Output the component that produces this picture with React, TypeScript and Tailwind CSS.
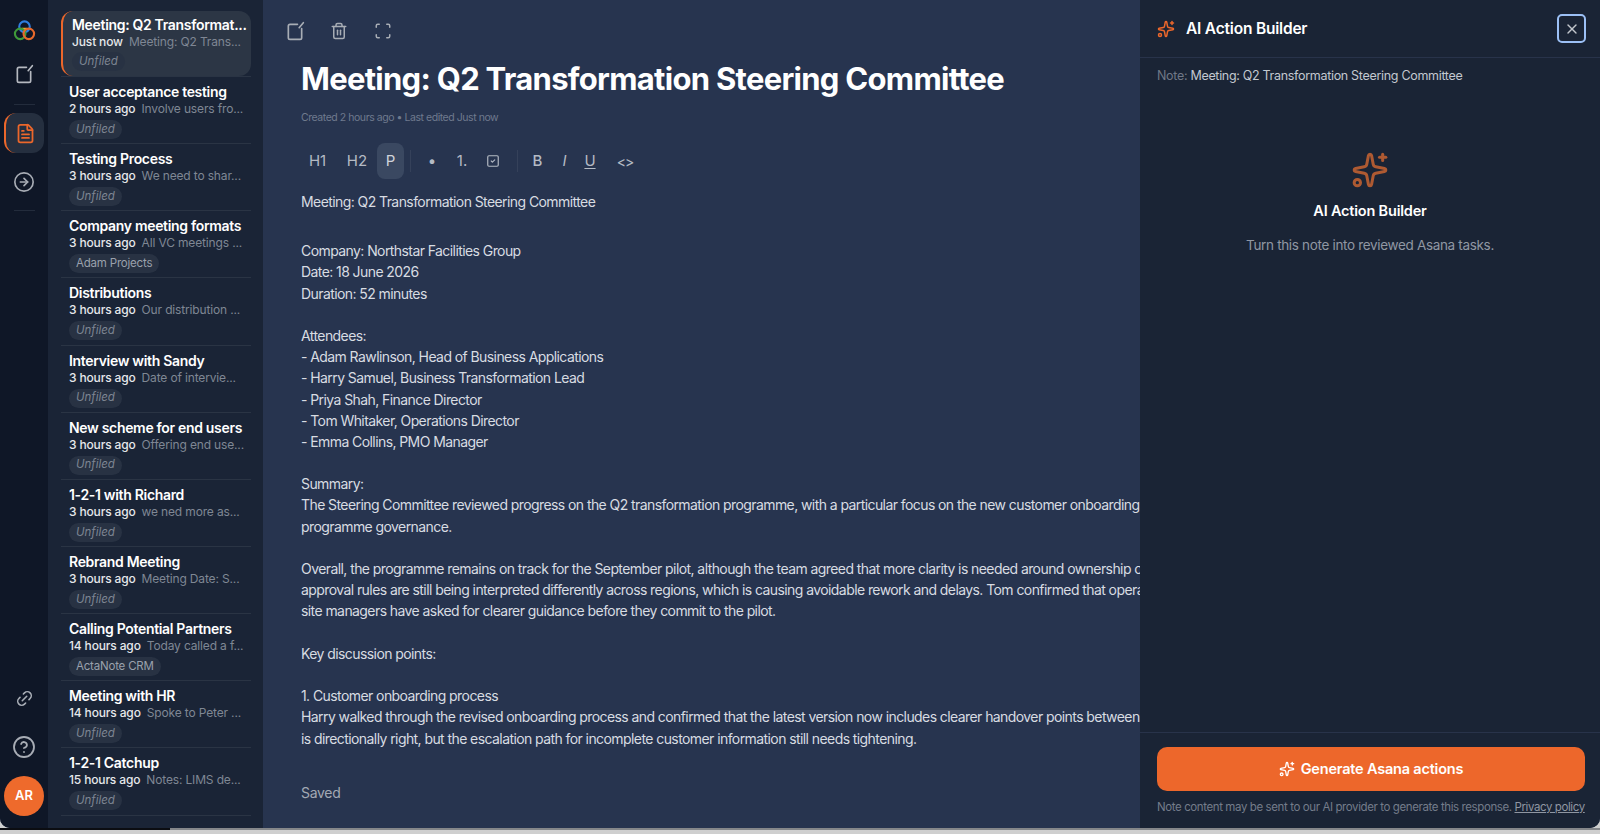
import { CircleArrowRight, CircleHelp, FileText, Link2, Scan, Sparkles, SquareCheck, Trash2, X } from 'lucide-react';

const NOTES = [
  { title: 'User acceptance testing', time: '2 hours ago', preview: 'Involve users fro...', tag: 'Unfiled' },
  { title: 'Testing Process', time: '3 hours ago', preview: 'We need to shar...', tag: 'Unfiled' },
  { title: 'Company meeting formats', time: '3 hours ago', preview: 'All VC meetings ...', tag: 'Adam Projects' },
  { title: 'Distributions', time: '3 hours ago', preview: 'Our distribution ...', tag: 'Unfiled' },
  { title: 'Interview with Sandy', time: '3 hours ago', preview: 'Date of intervie...', tag: 'Unfiled' },
  { title: 'New scheme for end users', time: '3 hours ago', preview: 'Offering end use...', tag: 'Unfiled' },
  { title: '1-2-1 with Richard', time: '3 hours ago', preview: 'we ned more as...', tag: 'Unfiled' },
  { title: 'Rebrand Meeting', time: '3 hours ago', preview: 'Meeting Date: S...', tag: 'Unfiled' },
  { title: 'Calling Potential Partners', time: '14 hours ago', preview: 'Today called a f...', tag: 'ActaNote CRM' },
  { title: 'Meeting with HR', time: '14 hours ago', preview: 'Spoke to Peter ...', tag: 'Unfiled' },
  { title: '1-2-1 Catchup', time: '15 hours ago', preview: 'Notes: LIMS de...', tag: 'Unfiled' },
];

const BODY = [
  'Company: Northstar Facilities Group',
  'Date: 18 June 2026',
  'Duration: 52 minutes',
  '',
  'Attendees:',
  '- Adam Rawlinson, Head of Business Applications',
  '- Harry Samuel, Business Transformation Lead',
  '- Priya Shah, Finance Director',
  '- Tom Whitaker, Operations Director',
  '- Emma Collins, PMO Manager',
  '',
  'Summary:',
  'The Steering Committee reviewed progress on the Q2 transformation programme, with a particular focus on the new customer onboarding',
  'programme governance.',
  '',
  'Overall, the programme remains on track for the September pilot, although the team agreed that more clarity is needed around ownership of',
  'approval rules are still being interpreted differently across regions, which is causing avoidable rework and delays. Tom confirmed that operations',
  'site managers have asked for clearer guidance before they commit to the pilot.',
  '',
  'Key discussion points:',
  '',
  '1. Customer onboarding process',
  'Harry walked through the revised onboarding process and confirmed that the latest version now includes clearer handover points between',
  'is directionally right, but the escalation path for incomplete customer information still needs tightening.',
];

function ComposeIcon({ className }: { className: string }) {
  return (
    <svg viewBox="0 0 24 24" fill="none" stroke="currentColor" strokeWidth="2" strokeLinecap="round" strokeLinejoin="round" className={className}>
      <path d="M15 4H6a2 2 0 0 0-2 2v14a2 2 0 0 0 2 2h12a2 2 0 0 0 2-2V9" />
      <path d="M22 2l-5 6" />
    </svg>
  );
}

function Logo() {
  return (
    <svg viewBox="0 0 24 24" className="h-[23px] w-[23px]" fill="none" strokeWidth="2.2">
      <path d="M9 9 L15 9 L12 15 Z" fill="#e3b32a" />
      <path d="M10 12 L14 12 L12 16 Z" fill="#3f9a3a" />
      <circle cx="12" cy="8" r="5.5" stroke="#2f7fe0" />
      <circle cx="7.5" cy="15.5" r="5.5" stroke="#3f9a3a" />
      <circle cx="16.5" cy="15.5" r="5.5" stroke="#e8692c" />
    </svg>
  );
}

function Tag({ label }: { label: string }) {
  const unfiled = label === 'Unfiled';
  return (
    <span className={`flex h-[19px] items-center rounded-full bg-[#283243] px-[7px] text-[11.5px] leading-none ${unfiled ? 'italic text-[#7d8592]' : 'tracking-[-0.2px] text-[#9aa1ac]'}`}>
      {label}
    </span>
  );
}

export default function App() {
  return (
    <div className="h-[834px] w-[1600px] overflow-hidden bg-[#cfcfcf] text-white" style={{ fontFamily: 'Inter, "Noto Sans", sans-serif' }}>
      <div className="flex h-[828px] overflow-hidden rounded-b-[10px] bg-[#27344f]">
        {/* Rail */}
        <aside className="flex w-[48px] shrink-0 flex-col items-center bg-[#0f1727] pt-[19px] pb-[12px]">
          <Logo />
          <ComposeIcon className="mt-[22px] h-[20px] w-[20px] text-[#b5b9c0]" />
          <div className="mt-[20px] mb-[8px] h-px w-[21px] bg-[#232c3c]" />
          <div className="flex h-[40px] w-[40px] shrink-0 items-center justify-center rounded-[12px] border-l-2 border-[#ec672b] bg-[#252f3f]">
            <FileText className="h-[21px] w-[21px] text-[#ec672b]" />
          </div>
          <CircleArrowRight className="mt-[18px] h-[22px] w-[22px] text-[#a8adb5]" strokeWidth={1.8} />
          <div className="mt-[17px] h-px w-[21px] bg-[#232c3c]" />
          <div className="flex-1" />
          <Link2 className="mb-[27px] h-[19px] w-[19px] -rotate-45 text-[#a8adb5]" />
          <CircleHelp className="mb-[17px] h-[24px] w-[24px] text-[#a8adb5]" strokeWidth={1.8} />
          <div className="flex h-[40px] w-[40px] items-center justify-center rounded-full bg-[#ee6a2c] text-[13px] font-semibold">AR</div>
        </aside>

        {/* Note list */}
        <nav className="w-[215px] shrink-0 bg-[#1a2436] pt-[11px] pl-[13px] pr-[12px]">
          <div className="h-[65px] rounded-[12px] border-l-2 border-[#ec672b] bg-[#2c3645] pl-[9px] pt-[5px]">
            <p className="truncate text-[14px] leading-[17px] font-semibold tracking-[-0.32px] text-white">Meeting: Q2 Transformat...</p>
            <p className="truncate text-[12px] leading-[17px] tracking-[-0.15px]">
              <span className="font-medium text-[#e6e8eb]">Just now</span>
              <span className="ml-[6px] text-[#7f8794]">Meeting: Q2 Trans...</span>
            </p>
            <div className="mt-[2px] flex"><Tag label="Unfiled" /></div>
          </div>
          {NOTES.map(note => (
            <div key={note.title} className="h-[67.15px] border-t border-[#2a3444] pl-[8px] pt-[6px]">
              <p className="truncate text-[14px] leading-[17px] font-semibold tracking-[-0.32px] text-white">{note.title}</p>
              <p className="truncate text-[12px] leading-[17px] tracking-[-0.15px]">
                <span className="font-medium text-[#e6e8eb]">{note.time}</span>
                <span className="ml-[6px] text-[#7f8794]">{note.preview}</span>
              </p>
              <div className="mt-[3px] flex"><Tag label={note.tag} /></div>
            </div>
          ))}
          <div className="border-t border-[#2a3444]" />
        </nav>

        {/* Editor */}
        <main className="min-w-0 flex-1 overflow-hidden pl-[38px]">
          <div className="flex h-[62px] items-center gap-[25px] text-[#a8adb5]">
            <ComposeIcon className="-ml-[16px] h-[20px] w-[20px]" />
            <Trash2 className="h-[18px] w-[18px]" />
            <Scan className="ml-[1px] h-[18px] w-[18px]" />
          </div>
          <h1 className="text-[31px] leading-[34px] font-bold tracking-[-0.71px] whitespace-nowrap text-white">Meeting: Q2 Transformation Steering Committee</h1>
          <p className="mt-[15px] text-[10.5px] leading-[14px] tracking-[-0.45px] text-[#6f7a8e]">Created 2 hours ago • Last edited Just now</p>

          <div className="mt-[18px] -ml-[3px] flex h-[36px] items-center text-[15px] text-[#b4bac4]">
            <span className="w-[39px] text-center">H1</span>
            <span className="w-[40px] text-center">H2</span>
            <span className="flex h-[36px] w-[27px] items-center justify-center rounded-[8px] bg-[#3a4861] text-[#d0d4da]">P</span>
            <span className="ml-[6px] mr-[4px] h-[22px] w-px bg-[#35415a]" />
            <span className="w-[34px] text-center">•</span>
            <span className="w-[26px] text-center">1.</span>
            <span className="flex w-[35px] justify-center"><SquareCheck className="h-[14px] w-[14px]" /></span>
            <span className="ml-[7px] mr-[5px] h-[22px] w-px bg-[#35415a]" />
            <span className="w-[29px] text-center font-medium">B</span>
            <span className="w-[25px] text-center italic">I</span>
            <span className="w-[26px] text-center underline underline-offset-2">U</span>
            <span className="w-[44px] text-center text-[14px] tracking-[-1px]">{'<>'}</span>
          </div>

          <div className="mt-[12px] whitespace-pre text-[14px] leading-[21.2px] tracking-[-0.58px] text-[#d8dce2]">
            <p className="mb-[28px]">Meeting: Q2 Transformation Steering Committee</p>
            {BODY.map((line, i) => (
              <div key={i} className="h-[21.2px]">{line}</div>
            ))}
          </div>
          <p className="mt-[33px] text-[14px] leading-[21px] tracking-[-0.3px] text-[#a3a9b4]">Saved</p>
        </main>

        {/* AI panel */}
        <aside className="flex w-[460px] shrink-0 flex-col bg-[#1a2435]">
          <header className="flex h-[58px] items-center border-b border-[#28334a] pl-[17px] pr-[14px]">
            <Sparkles className="h-[18px] w-[18px] text-[#ec672b]" />
            <span className="ml-[11px] flex-1 text-[15.5px] font-semibold tracking-[-0.2px]">AI Action Builder</span>
            <button className="flex h-[29px] w-[29px] items-center justify-center rounded-[5px] border-[2.5px] border-[#9cc0f5] text-[#c2c6cc]">
              <X className="h-[16px] w-[16px]" />
            </button>
          </header>
          <p className="mt-[9px] pl-[17px] text-[12.5px] leading-[18px] tracking-[-0.31px] text-[#c3c8d0]">
            <span className="text-[#6f7887]">Note: </span>Meeting: Q2 Transformation Steering Committee
          </p>
          <div className="flex flex-1 flex-col items-center pt-[66px]">
            <Sparkles className="h-[38px] w-[38px] text-[#ae5a32]" strokeWidth={1.9} />
            <p className="mt-[12px] text-[14.5px] leading-[20px] font-semibold tracking-[-0.2px]">AI Action Builder</p>
            <p className="mt-[14px] text-[13.5px] leading-[20px] tracking-[-0.33px] text-[#9097a3]">Turn this note into reviewed Asana tasks.</p>
          </div>
          <footer className="h-[96px] border-t border-[#28334a] pl-[17px] pr-[15px] pt-[14px]">
            <button className="flex h-[44px] w-full items-center justify-center gap-[6px] rounded-[10px] bg-[#ed672b] text-[14.5px] font-semibold tracking-[-0.2px]">
              <Sparkles className="h-[16px] w-[16px]" />
              Generate Asana actions
            </button>
            <p className="mt-[8px] text-[11.5px] leading-[16px] tracking-[-0.4px] whitespace-nowrap text-[#747c8a]">
              Note content may be sent to our AI provider to generate this response. <span className="text-[#8f96a2] underline">Privacy policy</span>
            </p>
          </footer>
        </aside>
      </div>
      <div className="flex h-[2px]">
        <div className="w-[170px] bg-[#0b0d12]" />
        <div className="flex-1 bg-[#85878a]" />
      </div>
    </div>
  );
}
